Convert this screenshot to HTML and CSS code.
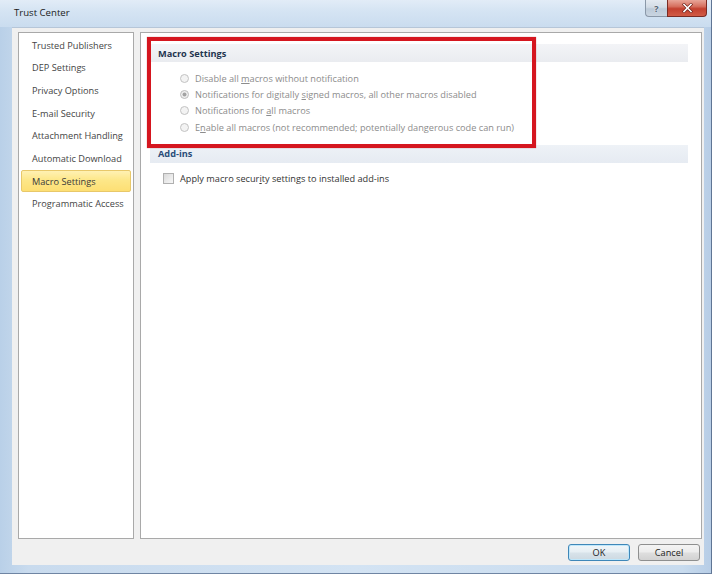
FILE: index.html
```html
<!DOCTYPE html>
<html lang="en">
<head>
<meta charset="utf-8">
<title>Trust Center</title>
<link rel="stylesheet" href="styles.css">
</head>
<body>
<div class="window">
  <div class="titlebar">
    <span class="title">Trust Center</span>
    <div class="caption-buttons">
      <div class="cap-btn help">?</div>
      <div class="cap-btn close">
        <svg width="11" height="10" viewBox="0 0 11 10">
          <path d="M2 1.5 L9 8.5 M9 1.5 L2 8.5" stroke="#6b1c14" stroke-width="3" stroke-linecap="square"/>
          <path d="M2 1.5 L9 8.5 M9 1.5 L2 8.5" stroke="#ffffff" stroke-width="1.6" stroke-linecap="square"/>
        </svg>
      </div>
    </div>
  </div>
  <div class="client">
    <div class="panes">
      <nav class="nav">
        <div class="nav-item">Trusted Publishers</div>
        <div class="nav-item">DEP Settings</div>
        <div class="nav-item">Privacy Options</div>
        <div class="nav-item">E-mail Security</div>
        <div class="nav-item">Attachment Handling</div>
        <div class="nav-item">Automatic Download</div>
        <div class="nav-item selected">Macro Settings</div>
        <div class="nav-item">Programmatic Access</div>
      </nav>
      <div class="content">
        <div class="section-bar">Macro Settings</div>
        <div class="radio-list">
          <div class="radio-row">
            <svg class="radio" width="9" height="9" viewBox="0 0 9 9"><circle cx="4.5" cy="4.5" r="4" fill="#f3f3f3" stroke="#c2c2c2" stroke-width="1"/></svg>
            <span>Disable all <u>m</u>acros without notification</span>
          </div>
          <div class="radio-row">
            <svg class="radio" width="9" height="9" viewBox="0 0 9 9"><circle cx="4.5" cy="4.5" r="4" fill="#efefef" stroke="#bdbdbd" stroke-width="1"/><circle cx="4.5" cy="4.5" r="2" fill="#a3a3a3"/></svg>
            <span>Notifications for digitally <u>s</u>igned macros, all other macros disabled</span>
          </div>
          <div class="radio-row">
            <svg class="radio" width="9" height="9" viewBox="0 0 9 9"><circle cx="4.5" cy="4.5" r="4" fill="#f3f3f3" stroke="#c2c2c2" stroke-width="1"/></svg>
            <span>Notifications for <u>a</u>ll macros</span>
          </div>
          <div class="radio-row">
            <svg class="radio" width="9" height="9" viewBox="0 0 9 9"><circle cx="4.5" cy="4.5" r="4" fill="#f3f3f3" stroke="#c2c2c2" stroke-width="1"/></svg>
            <span>E<u>n</u>able all macros (not recommended; potentially dangerous code can run)</span>
          </div>
        </div>
        <div class="section-bar addins">Add-ins</div>
        <div class="check-row">
          <span class="checkbox"></span>
          <span>Apply macro secur<u>i</u>ty settings to installed add-ins</span>
        </div>
        <div class="highlight-box"></div>
      </div>
    </div>
    <div class="footer">
      <button class="btn default">OK</button>
      <button class="btn">Cancel</button>
    </div>
  </div>
</div>
</body>
</html>
```

FILE: styles.css
```css
* { box-sizing: border-box; }

html, body {
  margin: 0;
  padding: 0;
  background: #ffffff;
}

body {
  font-family: "Open Sans", "Noto Sans", sans-serif;
  font-size: 9.2px;
  color: #333;
}

.window {
  width: 712px;
  height: 574px;
  display: flex;
  flex-direction: column;
  padding: 0 7px 8px 12px;
  background: linear-gradient(to right, #b9d0e8 0, #c9dbee 4%, #d3e3f3 50%, #c8dbee 96%, #b7cde6 100%);
  border-right: 1px solid #5f7594;
  border-bottom: 1px solid #6f85a3;
}

.titlebar {
  height: 27px;
  flex: none;
  display: flex;
  align-items: flex-start;
  margin: 0 -7px 0 -12px;
  padding: 0 4px 0 14px;
  background: linear-gradient(to bottom, #e2ecf7 0, #d5e4f3 40%, #cadcef 100%);
}

.title {
  line-height: 26px;
  font-size: 9.6px;
  color: #1b1b1b;
}

.caption-buttons {
  margin-left: auto;
  display: flex;
  height: 17px;
}

.cap-btn {
  height: 17px;
  display: flex;
  align-items: center;
  justify-content: center;
}

.help {
  width: 22px;
  border: 1px solid #8a98a8;
  border-top: none;
  border-right: none;
  border-radius: 0 0 0 4px;
  background: linear-gradient(to bottom, #e4eaf1 0, #d2dbe5 45%, #bccad8 55%, #c9d5e1 100%);
  color: #50606f;
  font-size: 9px;
  font-weight: bold;
  text-shadow: 0 0 2px #ffffff;
}

.close {
  width: 40px;
  border: 1px solid #7a2b23;
  border-top: none;
  border-radius: 0 0 4px 0;
  background: linear-gradient(to bottom, #e8a699 0, #d6705f 40%, #c3402f 55%, #d15b45 100%);
}

.client {
  flex: 1;
  display: flex;
  flex-direction: column;
  padding: 4px 2px 4px 6px;
  background: #f0f0f0;
  border-top: 1px solid #b6c6d8;
}

.panes {
  flex: 1;
  display: flex;
  gap: 6px;
}

.nav {
  width: 116px;
  background: #ffffff;
  border: 1px solid #a9a9a9;
  padding-top: 1px;
}

.nav-item {
  height: 22.65px;
  margin: 0 2px;
  padding-left: 10px;
  border: 1px solid transparent;
  border-radius: 2px;
  display: flex;
  align-items: center;
  color: #444;
  white-space: nowrap;
}

.nav-item.selected {
  background: linear-gradient(to bottom, #fff1b3 0, #fde789 45%, #fddf74 100%);
  border-color: #e8c86a;
  color: #3a3a3a;
}

.content {
  flex: 1;
  position: relative;
  background: #ffffff;
  border: 1px solid #a9a9a9;
  padding: 11px 13px 0 9px;
}

.section-bar {
  height: 18px;
  padding-left: 8px;
  display: flex;
  align-items: center;
  background: linear-gradient(to bottom, #f3f4f7 0, #eaecf0 100%);
  color: #1f344f;
  font-weight: bold;
}

.section-bar.addins {
  margin-top: 9.4px;
  background: linear-gradient(to bottom, #eef2f7 0, #e6ebf2 100%);
  color: #294c78;
}

.radio-list {
  padding: 8px 0 0 30px;
}

.radio-row {
  height: 16.4px;
  display: flex;
  align-items: center;
  gap: 6px;
  color: #8c8c8c;
  white-space: nowrap;
}

.radio { flex: none; }

.check-row {
  margin-top: 8px;
  height: 16px;
  padding-left: 13px;
  display: flex;
  align-items: center;
  gap: 6px;
  color: #333;
  white-space: nowrap;
}

.checkbox {
  width: 11px;
  height: 11px;
  flex: none;
  border: 1px solid #b0b0b0;
  background: linear-gradient(135deg, #d9d9d9 0, #ececec 60%, #f7f7f7 100%);
}

.highlight-box {
  position: absolute;
  left: 6px;
  top: 4px;
  width: 389px;
  height: 111px;
  border: 4px solid #d5161f;
  box-shadow: 0 0 1px rgba(150, 0, 0, 0.5);
}

.footer {
  flex: none;
  height: 17px;
  margin-top: 5px;
  padding-right: 2px;
  display: flex;
  justify-content: flex-end;
  gap: 8px;
}

.btn {
  width: 62px;
  height: 17px;
  padding: 0;
  font-family: inherit;
  font-size: 9.2px;
  color: #222;
  border: 1px solid #8e8f8f;
  border-radius: 3px;
  background: linear-gradient(to bottom, #f4f4f4 0, #ececec 48%, #dedede 52%, #d2d2d2 100%);
}

.btn.default {
  border-color: #3f87b8;
  box-shadow: inset 0 0 0 1px #bfe7fb;
  background: linear-gradient(to bottom, #f1f6f9 0, #e6eef3 48%, #d8e3ea 52%, #cdd9e1 100%);
}
```
